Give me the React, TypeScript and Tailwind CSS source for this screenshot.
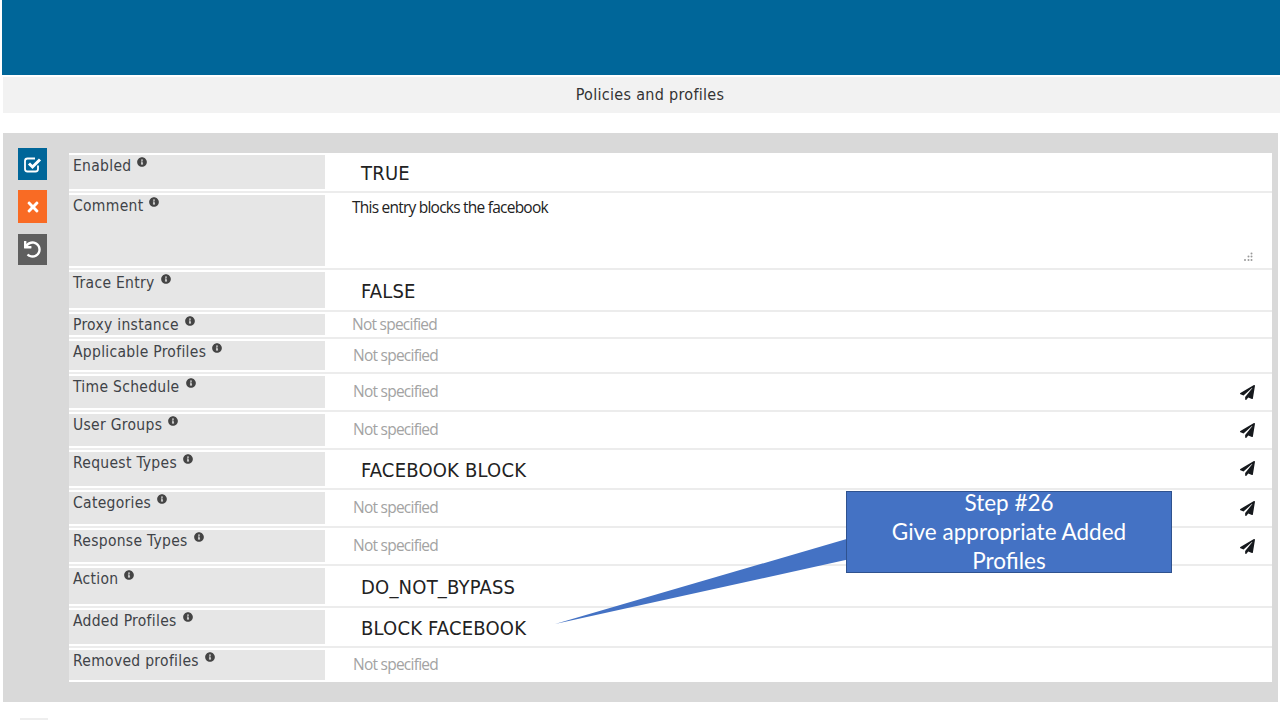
import { FaTimes, FaUndo, FaPaperPlane, FaInfoCircle } from "react-icons/fa";

type Row = {
  label: string;
  h: string;
  value?: string;
  pad?: string;
  send?: boolean;
  big?: boolean;
};

const rows: Row[] = [
  { label: "Enabled", h: "h-[40px]", value: "TRUE", big: true },
  { label: "Comment", h: "h-[77px]" },
  { label: "Trace Entry", h: "h-[42px]", value: "FALSE", big: true },
  { label: "Proxy instance", h: "h-[27px]", pad: "pl-[27px]" },
  { label: "Applicable Profiles", h: "h-[35px]", pad: "pl-[28px]" },
  { label: "Time Schedule", h: "h-[38px]", pad: "pl-[28px]", send: true },
  { label: "User Groups", h: "h-[38px]", pad: "pl-[28px]", send: true },
  { label: "Request Types", h: "h-[40px]", value: "FACEBOOK BLOCK", big: true, send: true },
  { label: "Categories", h: "h-[38px]", pad: "pl-[28px]", send: true },
  { label: "Response Types", h: "h-[38px]", pad: "pl-[28px]", send: true },
  { label: "Action", h: "h-[42px]", value: "DO_NOT_BYPASS", big: true },
  { label: "Added Profiles", h: "h-[40px]", value: "BLOCK FACEBOOK", big: true },
  { label: "Removed profiles", h: "h-[34px]", pad: "pl-[28px]" },
];

function FieldRow({ row, last }: { row: Row; last: boolean }) {
  return (
    <div className={`flex ${row.h} ${last ? "" : "border-b-2 border-[#ececec]"}`}>
      <div className="w-[256px] shrink-0 my-[2px] bg-[#e6e6e6] pl-[4px] pt-[1px] text-[15.5px] leading-[20px] text-[#3f4348] flex items-start tracking-[0.3px] [font-stretch:condensed] font-['DejaVu_Sans',sans-serif]">
        <span>{row.label}</span>
        <FaInfoCircle className="ml-[6px] mt-[1px] text-[10px] text-[#444]" />
      </div>
      <div className="flex-1 relative flex items-center">
        {row.label === "Comment" ? (
          <>
            <div className="self-start pl-[27px] pt-[2px] text-[15.5px] leading-[24px] text-[#222] font-['Open_Sans',sans-serif] tracking-[-0.77px]">
              This entry blocks the facebook
            </div>
            <svg className="absolute right-[18px] bottom-[5px]" width="12" height="12" viewBox="0 0 12 12" fill="#999">
              <circle cx="9.5" cy="2.5" r="1" />
              <circle cx="6.5" cy="5.5" r="1" />
              <circle cx="9.5" cy="5.5" r="1" />
              <circle cx="3" cy="9" r="1" />
              <circle cx="6.5" cy="9" r="1" />
              <circle cx="9.5" cy="9" r="1" />
            </svg>
          </>
        ) : row.big ? (
          <span className="pl-[36px] pt-[2px] text-[20px] text-[#222] tracking-[0.2px] [font-stretch:condensed] font-['DejaVu_Sans',sans-serif]">
            {row.value}
          </span>
        ) : (
          <span className={`${row.pad} text-[15.5px] text-[#a3a3a3] font-['Open_Sans',sans-serif] tracking-[-0.75px]`}>
            Not specified
          </span>
        )}
        {row.send && <FaPaperPlane className="absolute right-[17px] top-[11px] text-[15px] text-[#16191d]" />}
      </div>
    </div>
  );
}

export default function App() {
  return (
    <div className="w-[1280px] h-[720px] overflow-hidden bg-white pl-[2px] font-['Noto_Sans',sans-serif] relative">
      <div className="h-[75px] bg-[#006699]" />
      <div className="mt-[2px] ml-px h-[36px] bg-[#f2f2f2] flex items-center justify-center text-[16px] text-[#333] pl-[17px] tracking-[0.3px] [font-stretch:condensed] font-['DejaVu_Sans',sans-serif]">
        Policies and profiles
      </div>
      <div className="mt-[20px] ml-px mr-[2px] h-[569px] bg-[#d9d9d9] flex pt-[20px]">
        <div className="w-[66px] shrink-0 pl-[15px] flex flex-col -mt-[5px]">
          <div className="w-[29px] h-[32px] bg-[#006699] flex items-center justify-center">
            <svg width="19" height="19" viewBox="0 0 19 19" fill="none" stroke="#fff">
              <path d="M15 10.5v3.5a2.5 2.5 0 0 1-2.5 2.5H4.5A2.5 2.5 0 0 1 2 14V6a2.5 2.5 0 0 1 2.5-2.5H12" strokeWidth="1.8" />
              <path d="M6 8.5l3.5 3.5L17 4.5" strokeWidth="3" />
            </svg>
          </div>
          <div className="mt-[10px] w-[29px] h-[33px] bg-[#f96b24] flex items-center justify-center text-white text-[16px]">
            <FaTimes />
          </div>
          <div className="mt-[11px] w-[29px] h-[31px] bg-[#5f5f5f] flex items-center justify-center text-white text-[17px]">
            <FaUndo />
          </div>
        </div>
        <div className="w-[1203px] h-[529px] bg-white flex flex-col">
          {rows.map((row, i) => (
            <FieldRow key={row.label} row={row} last={i === rows.length - 1} />
          ))}
        </div>
      </div>
      <div className="ml-[18px] mt-[16px] w-[28px] h-[10px] bg-[#eeeeee]" />

      {/* callout drawn on top of the form */}
      <svg className="absolute left-[550px] top-[530px]" width="310" height="100" viewBox="0 0 310 100">
        <polygon points="5,94 300,8 300,29" fill="#4472c4" />
      </svg>
      <div className="absolute left-[846px] top-[491px] w-[326px] h-[82px] bg-[#4472c4] border border-[#2f528f] text-white text-center text-[22.5px] leading-[29px] font-['Lato',sans-serif]">
        <div className="-mt-[4px]">
          Step #26
          <br />
          Give appropriate Added
          <br />
          Profiles
        </div>
      </div>
    </div>
  );
}
